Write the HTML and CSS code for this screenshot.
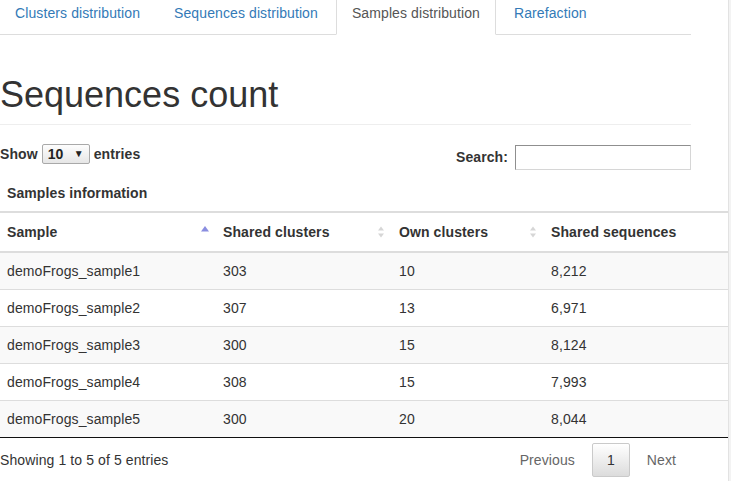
FILE: index.html
```html
<!DOCTYPE html>
<html>
<head>
<meta charset="utf-8">
<link rel="stylesheet" href="styles.css">
</head>
<body>
<div class="page">
  <div class="main">
    <ul class="tabs">
      <li><a href="#">Clusters distribution</a></li>
      <li><a href="#">Sequences distribution</a></li>
      <li class="active"><a href="#">Samples distribution</a></li>
      <li><a href="#">Rarefaction</a></li>
    </ul>
    <h1 class="page-header">Sequences count</h1>
    <div class="dt-top">
      <label class="length">Show <span class="select"><select><option>10</option></select></span> entries</label>
      <label class="filter">Search: <input type="search"></label>
    </div>
    <table class="data">
      <caption>Samples information</caption>
      <colgroup><col class="c1"><col class="c2"><col class="c3"><col class="c4"></colgroup>
      <thead>
        <tr>
          <th>Sample<svg class="sort" width="8" height="12" viewBox="0 0 8 12"><path d="M0 5.5 L4 0 L8 5.5 Z" fill="#8a8ee0"/></svg></th>
          <th>Shared clusters<svg class="sort" width="8" height="12" viewBox="0 0 8 12"><path d="M1 4.5 L4 0.5 L7 4.5 Z M1 7.5 L4 11.5 L7 7.5 Z" fill="#d6d6d6"/></svg></th>
          <th>Own clusters<svg class="sort" width="8" height="12" viewBox="0 0 8 12"><path d="M1 4.5 L4 0.5 L7 4.5 Z M1 7.5 L4 11.5 L7 7.5 Z" fill="#d6d6d6"/></svg></th>
          <th>Shared sequences</th>
        </tr>
      </thead>
      <tbody>
        <tr class="odd"><td>demoFrogs_sample1</td><td>303</td><td>10</td><td>8,212</td></tr>
        <tr><td>demoFrogs_sample2</td><td>307</td><td>13</td><td>6,971</td></tr>
        <tr class="odd"><td>demoFrogs_sample3</td><td>300</td><td>15</td><td>8,124</td></tr>
        <tr><td>demoFrogs_sample4</td><td>308</td><td>15</td><td>7,993</td></tr>
        <tr class="odd last"><td>demoFrogs_sample5</td><td>300</td><td>20</td><td>8,044</td></tr>
      </tbody>
    </table>
    <div class="dt-bottom">
      <div class="info">Showing 1 to 5 of 5 entries</div>
      <div class="paginate">
        <a class="btn disabled">Previous</a>
        <a class="btn current">1</a>
        <a class="btn disabled">Next</a>
      </div>
    </div>
  </div>
  <div class="edge"></div>
</div>
</body>
</html>
```
FILE: styles.css
```css
html, body {
  margin: 0;
  padding: 0;
  background: #fff;
}
body {
  font-family: "Liberation Sans", Arial, sans-serif;
  font-size: 14px;
  line-height: 20px;
  color: #333;
  letter-spacing: 0.1px;
}
.page {
  display: flex;
  min-height: 481px;
}
.main {
  width: 728px;
  flex: none;
}
.edge {
  flex: 1;
  background: #f3f3f3;
  border-left: 1px solid #e2e2e2;
}
.tabs {
  list-style: none;
  margin: 0 0 0 -1px;
  padding: 0;
  width: 692px;
  display: flex;
  border-bottom: 1px solid #ddd;
}
.tabs li {
  margin-bottom: -1px;
}
.tabs a {
  display: block;
  margin-right: 2px;
  padding: 3px 15px 10px;
  border: 1px solid transparent;
  border-top: 0;
  color: #337ab7;
  text-decoration: none;
  line-height: 20px;
  box-sizing: border-box;
  height: 35px;
}
.tabs .active a {
  color: #555;
  background: #fff;
  border-color: #ddd;
  border-bottom-color: transparent;
}
.page-header {
  width: 691px;
  margin: 40px 0 19px;
  padding-bottom: 9px;
  border-bottom: 1px solid #eee;
  font-size: 36px;
  font-weight: 500;
  line-height: 39.6px;
  color: #333;
  letter-spacing: 0;
}
.dt-top {
  width: 691px;
  display: flex;
  justify-content: space-between;
  align-items: flex-start;
  height: 27px;
}
.length {
  font-weight: bold;
  display: flex;
  align-items: center;
  height: 20px;
}
.select {
  position: relative;
  display: inline-block;
  margin: 0 4px;
}
.select select {
  appearance: none;
  -webkit-appearance: none;
  width: 48px;
  height: 20px;
  box-sizing: border-box;
  border: 1px solid #a9a9a9;
  border-radius: 2px;
  background: linear-gradient(#fdfdfd, #e6e6e6);
  font-family: "Liberation Sans", Arial, sans-serif;
  font-weight: bold;
  font-size: 14px;
  color: #222;
  padding: 0 0 0 5px;
  line-height: 18px;
}
.select::after {
  content: "\25BC";
  position: absolute;
  left: 32px;
  top: 1px;
  font-size: 10px;
  line-height: 18px;
  color: #222;
  pointer-events: none;
}
.filter {
  font-weight: bold;
  display: flex;
  align-items: center;
  gap: 7px;
  margin-top: 1px;
}
.filter input {
  width: 176px;
  height: 25px;
  box-sizing: border-box;
  margin: 0;
  border: 1px solid;
  border-color: #8f8f8f #d6d6d6 #d6d6d6 #8f8f8f;
  padding: 2px 4px;
  background: #fff;
}
.data {
  margin-top: 4px;
  width: 728px;
  table-layout: fixed;
  border-collapse: separate;
  border-spacing: 0;
}
.data caption {
  caption-side: top;
  text-align: left;
  font-weight: bold;
  padding: 8px 7px;
  color: #333;
}
.c1 { width: 216px; }
.c2 { width: 176px; }
.c3 { width: 152px; }
.c4 { width: 184px; }
.data th {
  position: relative;
  text-align: left;
  font-weight: bold;
  padding: 9px 7px 9px;
  border-top: 2px solid #ddd;
  border-bottom: 2px solid #ddd;
}
.sort {
  position: absolute;
  right: 7px;
  top: 13px;
}
.data td {
  padding: 8px 7px;
  border-bottom: 1px solid #ddd;
}
.data tr.odd td {
  background: #f9f9f9;
}
.data tr.last td {
  border-bottom-color: #111;
}
.dt-bottom {
  width: 691px;
  display: flex;
  justify-content: space-between;
  align-items: center;
  padding-top: 5px;
}
.paginate {
  display: flex;
}
.btn {
  display: block;
  margin-left: 2px;
  padding: 6px 14px;
  border: 1px solid transparent;
  border-radius: 2px;
  line-height: 20px;
  color: #333;
}
.btn.disabled {
  color: #666;
}
.btn.current {
  border-color: #cacaca;
  background: linear-gradient(#fff, #dcdcdc);
  color: #333;
}
```
